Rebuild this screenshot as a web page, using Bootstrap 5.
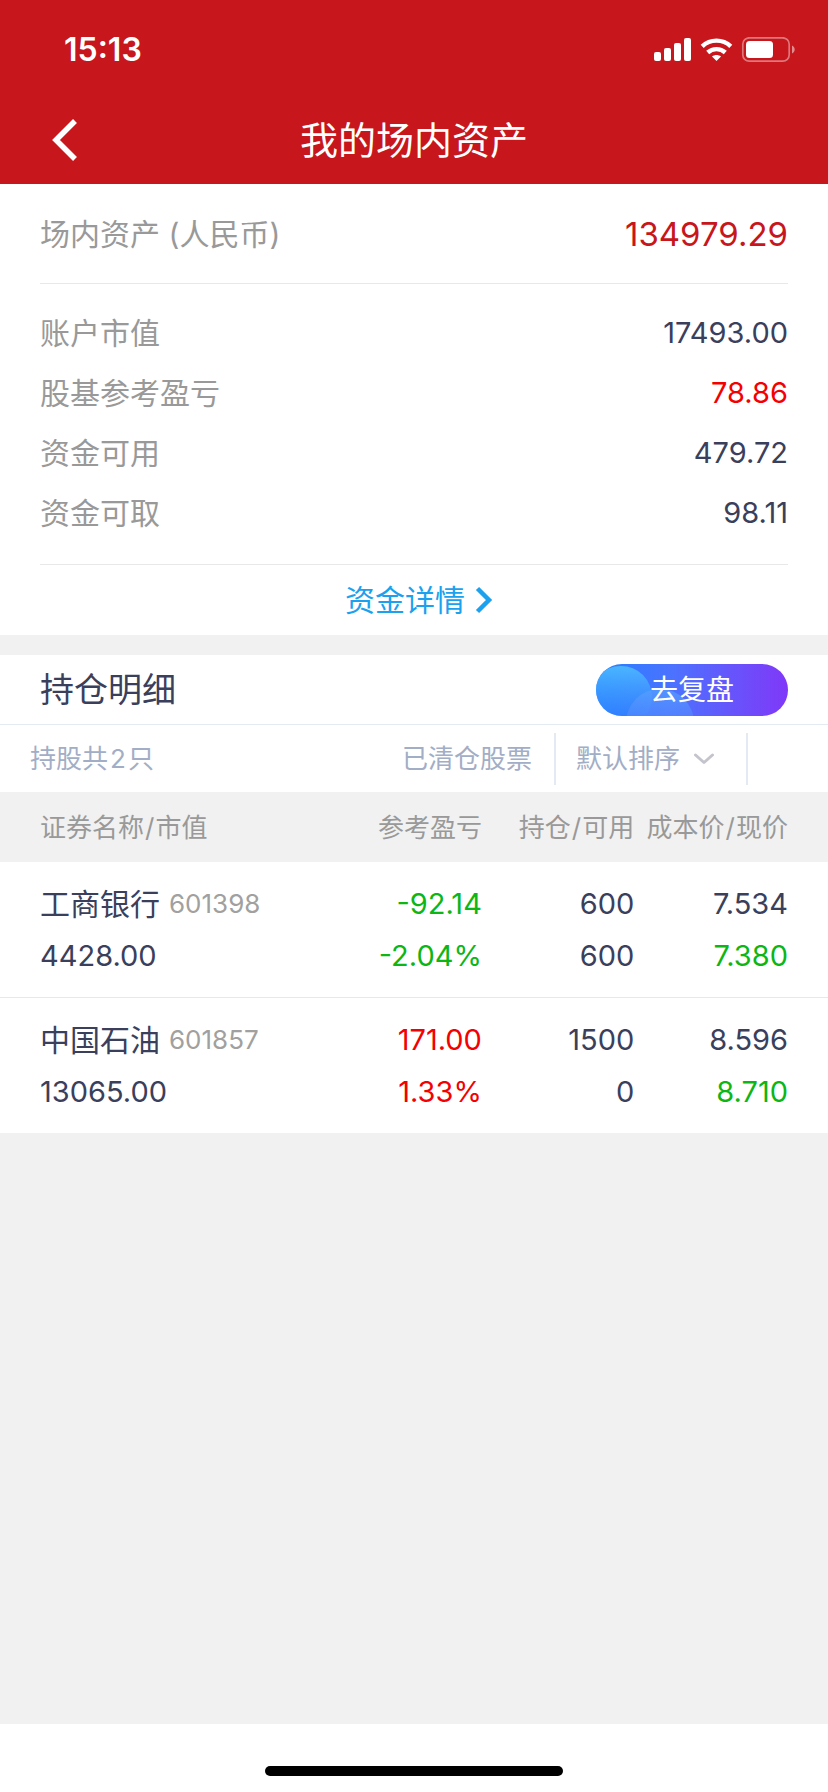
<!DOCTYPE html>
<html lang="zh-CN">
<head>
<meta charset="utf-8">
<meta name="viewport" content="width=device-width, initial-scale=1">
<title>我的场内资产</title>
<link href="https://cdn.jsdelivr.net/npm/bootstrap@5.3.0/dist/css/bootstrap.min.css" rel="stylesheet">
<style>
  :root { --brand: #c7161c; --ink: #3a405c; --soft: #999; --mist: #a2adc6; --line: #e8e8e8; --line-blue: #e3eaf2; --gutter: 40px; }
  body { font-family: Inter, "Noto Sans CJK SC", sans-serif; font-size: 30px; line-height: 52px; color: var(--ink); background: #f1f1f1; }
  .app-header { background: var(--brand); }
  .status-bar { height: 96px; padding: 4px 32px 0 64px; }
  .clock { font-size: 32px; font-weight: 600; }
  .title-bar { display: grid; grid-template-columns: 1fr auto 1fr; height: 88px; padding: 0 var(--gutter); }
  .title-bar h1 { font-size: 38px; font-weight: 400; line-height: 52px; }
  .back-btn { width: 48px; height: 64px; }
  .gutter { padding-left: var(--gutter); padding-right: var(--gutter); }
  .soft { color: var(--soft); }
  .total-row { height: 100px; border-bottom: 1px solid var(--line); }
  .total-value { font-size: 33px; color: var(--brand); }
  .details { padding: 19px 0 21px; border-bottom: 1px solid var(--line); }
  .details > div { height: 60px; }
  .amount { font-size: 29px; }
  .more-link { height: 70px; padding-left: 10px; gap: 10px; color: #1ba1ee; }
  .up { color: #f40000; }
  .down { color: #0db614; }
  .holdings-panel { margin-top: 20px; }
  .section-head { height: 70px; border-bottom: 1px solid var(--line-blue); }
  .section-head h2 { font-size: 34px; font-weight: 400; line-height: 52px; }
  .review-btn { width: 192px; height: 52px; font-size: 28px; line-height: 52px; }
  .filter-bar { height: 67px; padding: 0 80px 0 30px; font-size: 26px; color: var(--mist); }
  .count { margin: 0 2px; }
  .cleared { padding-right: 22px; }
  .sort-box { width: 194px; height: 52px; border: solid var(--line-blue); border-width: 0 2px; }
  .sort-box select { appearance: none; padding: 0 0 0 20px; font-size: 26px; color: var(--mist);
    background: transparent url("data:image/svg+xml,%3Csvg xmlns='http://www.w3.org/2000/svg' width='22' height='14' viewBox='0 0 22 14' fill='none' stroke='%23c4c4cc' stroke-width='3' stroke-linecap='round' stroke-linejoin='round'%3E%3Cpath d='M2.5 3l8.5 7.500 8.500-7.500'/%3E%3C/svg%3E") no-repeat right 31px center; }
  .holdings { table-layout: fixed; }
  .holdings th, .holdings td { padding: 16px 0 15px; text-align: right; font-weight: 400; white-space: nowrap; vertical-align: middle; }
  .holdings td { font-size: 29px; }
  .holdings thead th { height: 70px; padding: 2px 0 0; font-size: 26px; color: var(--soft); }
  .holdings tr > :first-child { padding-left: var(--gutter); text-align: left; }
  .holdings tr > :last-child { padding-right: var(--gutter); }
  .holdings tbody tr { background: #fff; }
  .holdings tbody tr + tr { border-top: 1px solid var(--line); }
  .c-profit { width: 20%; } .c-hold { width: 18.4%; } .c-price { width: 23.4%; }
  .slash { margin: 0 1px; }
  .stock { height: 52px; gap: 9px; }
  .stock-name { font-size: 30px; }
  .code { font-size: 26px; color: #a0a0a0; }
  .home-area { height: 68px; padding-top: 42px; }
  .home-line { width: 36%; height: 10px; }
</style>
</head>
<body class="d-flex flex-column min-vh-100">
<header class="app-header text-white">
  <div class="status-bar d-flex align-items-center justify-content-between">
    <span class="clock">15:13</span>
    <svg width="142" height="26" viewBox="0 0 142 26" fill="#fff" aria-hidden="true">
      <rect y="15" width="7" height="9" rx="2"/><rect x="10" y="11" width="7" height="13" rx="2"/><rect x="20" y="6" width="7" height="18" rx="2"/><rect x="30" y="1" width="7" height="23" rx="2"/>
      <path d="M62.500 24l-4.500-4.600c2.600-2 6.400-2 9 0z"/>
      <g fill="none" stroke="#fff" stroke-width="4.400"><path d="M53.700 15.500c5-4.500 12.600-4.500 17.600 0"/><path d="M48.200 9.300c8.100-7.600 20.500-7.600 28.600 0"/></g>
      <rect x="88.800" y=".8" width="46.400" height="23.400" rx="6.500" fill="none" stroke="#fff" stroke-opacity=".42" stroke-width="1.700"/>
      <rect x="92" y="4" width="27" height="17" rx="3.500"/>
      <path d="M138 8.500c3.600 1.600 3.600 6.400 0 8z" fill-opacity=".5"/>
    </svg>
  </div>
  <div class="title-bar align-items-center">
    <button class="back-btn btn p-0 border-0 d-flex align-items-center justify-content-center" type="button" aria-label="返回">
      <svg width="28" height="44" viewBox="0 0 28 44" fill="none" stroke="#fff" stroke-width="5.500"><path d="M25 3L6 22l19 19"/></svg>
    </button>
    <h1 class="m-0">我的场内资产</h1>
  </div>
</header>

<main class="flex-grow-1">
  <section class="bg-white gutter">
    <div class="total-row d-flex align-items-center justify-content-between">
      <span class="soft">场内资产 (人民币)</span><span class="total-value">134979.29</span>
    </div>
    <div class="details">
      <div class="d-flex align-items-center justify-content-between"><span class="soft">账户市值</span><span class="amount">17493.00</span></div>
      <div class="d-flex align-items-center justify-content-between"><span class="soft">股基参考盈亏</span><span class="amount up">78.86</span></div>
      <div class="d-flex align-items-center justify-content-between"><span class="soft">资金可用</span><span class="amount">479.72</span></div>
      <div class="d-flex align-items-center justify-content-between"><span class="soft">资金可取</span><span class="amount">98.11</span></div>
    </div>
    <a class="more-link d-flex align-items-center justify-content-center text-decoration-none" href="#">资金详情
      <svg width="18" height="28" viewBox="0 0 18 28" fill="none" stroke="currentColor" stroke-width="4.500"><path d="M2.500 2.500L14 14 2.500 25.500"/></svg>
    </a>
  </section>

  <section class="bg-white holdings-panel">
    <div class="section-head gutter d-flex align-items-center justify-content-between">
      <h2 class="m-0">持仓明细</h2>
      <button class="review-btn btn p-0 border-0 rounded-pill overflow-hidden position-relative text-white" type="button">
        <svg class="position-absolute top-0 start-0 w-100 h-100" viewBox="0 0 192 52" preserveAspectRatio="none" aria-hidden="true">
          <defs>
            <linearGradient id="pill"><stop offset="0" stop-color="#2580ff"/><stop offset=".4" stop-color="#4c72ff"/><stop offset="1" stop-color="#8038f8"/></linearGradient>
            <linearGradient id="bubble" x2="0" y2="1"><stop offset="0" stop-color="#4fc0ff" stop-opacity=".85"/><stop offset="1" stop-color="#2c74ff" stop-opacity=".5"/></linearGradient>
            <linearGradient id="bubble2" x2="0" y2="1"><stop offset="0" stop-color="#55a0ff" stop-opacity=".75"/><stop offset=".8" stop-color="#5a78ff" stop-opacity=".3"/></linearGradient>
          </defs>
          <rect width="192" height="52" fill="url(#pill)"/>
          <circle cx="25" cy="33" r="31" fill="url(#bubble)"/>
          <circle cx="64" cy="59" r="34" fill="url(#bubble2)"/>
        </svg>
        <span class="position-relative">去复盘</span>
      </button>
    </div>
    <div class="filter-bar d-flex align-items-center">
      <span class="me-auto">持股共<span class="count">2</span>只</span>
      <a class="cleared text-reset text-decoration-none" href="#">已清仓股票</a>
      <div class="sort-box"><select class="w-100 h-100 border-0 d-block" aria-label="排序方式"><option>默认排序</option></select></div>
    </div>
  </section>

  <table class="holdings w-100">
    <thead>
      <tr><th scope="col">证券名称<span class="slash">/</span>市值</th><th scope="col" class="c-profit">参考盈亏</th><th scope="col" class="c-hold">持仓<span class="slash">/</span>可用</th><th scope="col" class="c-price">成本价<span class="slash">/</span>现价</th></tr>
    </thead>
    <tbody>
      <tr><td><div class="stock d-flex align-items-center"><span class="stock-name">工商银行</span><span class="code">601398</span></div>4428.00</td><td class="down">-92.14<br>-2.04%</td><td>600<br>600</td><td>7.534<br><span class="down">7.380</span></td></tr>
      <tr><td><div class="stock d-flex align-items-center"><span class="stock-name">中国石油</span><span class="code">601857</span></div>13065.00</td><td class="up">171.00<br>1.33%</td><td>1500<br>0</td><td>8.596<br><span class="down">8.710</span></td></tr>
    </tbody>
  </table>
</main>

<footer class="home-area bg-white"><div class="home-line bg-black rounded-pill mx-auto"></div></footer>
<script src="https://cdn.jsdelivr.net/npm/bootstrap@5.3.0/dist/js/bootstrap.bundle.min.js"></script>
</body>
</html>
